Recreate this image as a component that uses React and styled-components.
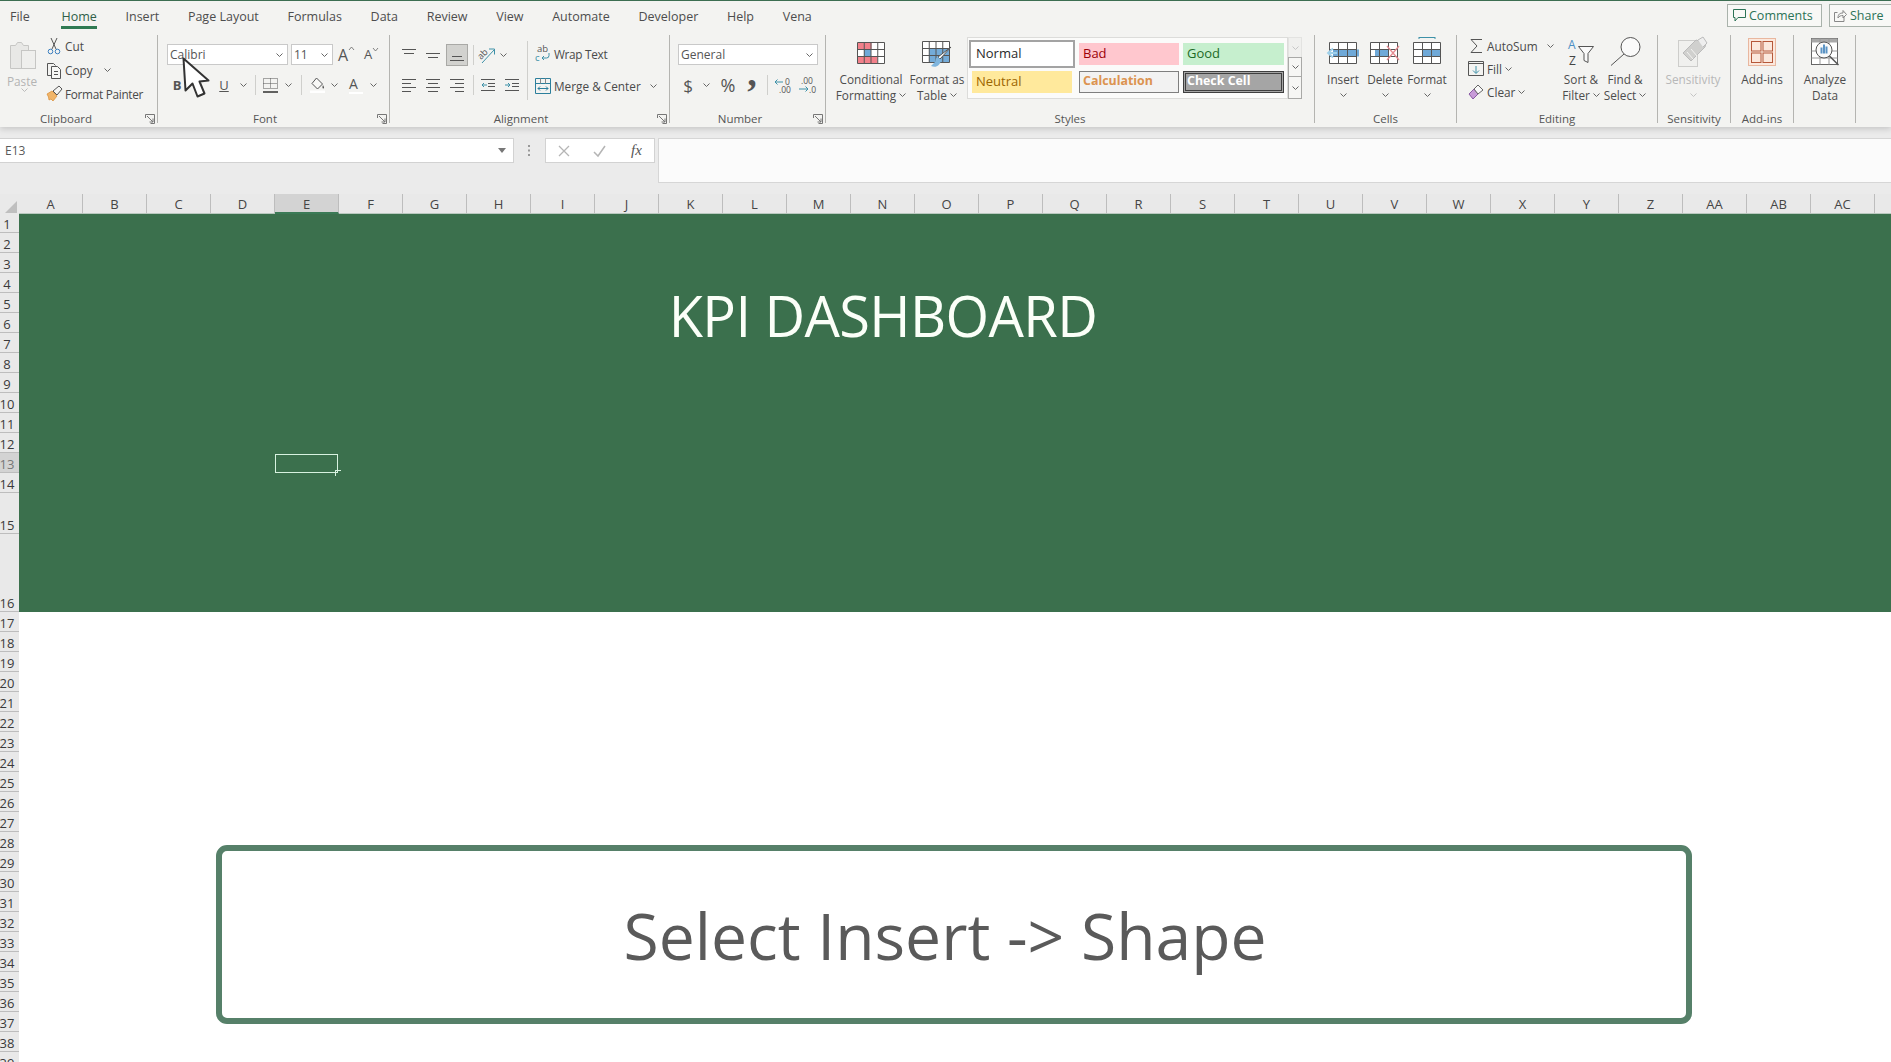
import React from 'react';
import styled, { createGlobalStyle } from 'styled-components';

const Global = createGlobalStyle`
  html, body { margin: 0; padding: 0; background: #fff; }
  #root { width: 1891px; height: 1062px; overflow: hidden; }
  * { box-sizing: border-box; }
`;

const Page = styled.div`
  position: relative; width: 1891px; height: 1062px; overflow: hidden; background: #fff;
  font-family: "Open Sans", "Noto Sans", sans-serif; font-size: 11.8px; color: #4a4a4a;
  display: flex; flex-direction: column;
`;
const Ribbon = styled.header`
  flex: none; height: 127px; background: #f3f3f1; border-top: 1px solid #3c6e52;
  box-shadow: 0 2px 6px rgba(0,0,0,.16); position: relative; z-index: 2;
`;
const TabRow = styled.nav`
  height: 28px; display: flex; align-items: flex-start; padding-left: 10px; gap: 28.7px; font-size: 12.5px;
`;
const Tab = styled.div`
  height: 28px; padding-top: 7px; line-height: 18px; white-space: nowrap; color: #4d4d4d;
  margin-left: ${p => p.$ml || 0}px;
  ${p => p.$active && 'border-bottom: 3px solid #2f7a52; color: #2f5f48;'}
`;
const HeadActions = styled.div`
  margin-left: auto; margin-right: -8px; margin-top: 3px; display: flex; gap: 7px;
`;
const HeadBtn = styled.div`
  display: flex; align-items: center; gap: 3px; height: 23px; padding-left: ${p => p.$pl}px;
  width: ${p => p.$w}px; flex: none; border: 1px solid #a9b2ab; background: #f8f8f6;
  color: #2c7356; font-size: 12.5px; white-space: nowrap;
`;
const Groups = styled.div`display: flex; height: 98px;`;
const Group = styled.section`
  flex: none; width: ${p => p.$w}px; height: 88px; margin-top: 6px; display: flex; flex-direction: column;
  border-right: 1px solid #b4b4b1;
`;
const Body = styled.div`
  flex: 1; min-height: 0; display: flex; padding-left: ${p => p.$pl || 0}px;
`;
const Footer = styled.div`flex: none; height: 14px; margin-bottom: -3px; display: flex; align-items: center;`;
const GroupLabel = styled.div`
  flex: 1; text-align: center; line-height: 14px; font-size: 11.5px; color: #555; padding-right: ${p => p.$pr || 0}px; white-space: nowrap;
`;
const LauncherBox = styled.div`flex: none; width: 10px; height: 10px; margin-right: 2px;`;

const PasteCol = styled.div`
  flex: none; width: 32px; margin-left: 6px; margin-right: 8px; display: flex; flex-direction: column; align-items: center;
  color: #b4b4b4; padding-top: 6px;
`;
const PasteText = styled.div`line-height: 14px; margin-top: 4px;`;
const Stack = styled.div`
  flex: none; width: ${p => p.$w ? p.$w + 'px' : 'auto'}; display: flex; flex-direction: column; padding-top: ${p => p.$pt || 0}px;
`;
const SmallRow = styled.div`
  height: ${p => p.$h || 24}px; padding-bottom: 2px; display: flex; align-items: center; gap: 3px; white-space: nowrap;
`;
const Tight = styled.span`letter-spacing: -.3px;`;
const ChevGap = styled.span`display: inline-flex; margin-left: ${p => p.$ml || 4}px;`;
const Controls = styled.div`flex: none; width: ${p => p.$w ? p.$w + 'px' : 'auto'}; display: flex; flex-direction: column; padding-top: 9px;`;
const Row1 = styled.div`height: 21px; display: flex; align-items: center;`;
const Row2 = styled.div`height: 26px; margin-top: 7px; display: flex; align-items: center;`;
const Select = styled.div`
  flex: none; width: ${p => p.$w}px; height: 21px; margin-right: ${p => p.$mr || 0}px; background: #fff; border: 1px solid #c9c9c9;
  display: flex; align-items: center; justify-content: space-between; padding: 0 4px 0 2px; color: #555; font-size: 12px;
`;
const Slot = styled.div`
  flex: none; width: ${p => p.$w}px; height: 22px; display: flex; align-items: center; justify-content: center;
  font-size: ${p => p.$fs || 12}px; font-weight: ${p => p.$b ? 700 : 400}; color: ${p => p.$c || '#555'};
  line-height: 1;
`;
const SelectedTool = styled.div`
  width: 22px; height: 22px; background: #d2d2cf; border: 1px solid #a9a9a6; display: flex; align-items: center; justify-content: center;
`;
const Divider = styled.div`
  flex: none; width: 1px; height: 20px; background: #cfcfcc; margin: 0 ${p => p.$r ?? p.$m}px 0 ${p => p.$m}px;
`;
const TallDivider = styled.div`
  flex: none; width: 1px; height: 59px; margin-top: 6px; background: #cfcfcc;
`;
const TextRow = styled.div`
  display: flex; align-items: center; gap: 3px; white-space: nowrap; height: 21px;
`;
const RightStack = styled.div`
  flex: none; display: flex; flex-direction: column; padding: 8px 0 0 7px; gap: 11px;
`;
const Big = styled.div`
  flex: none; width: ${p => p.$w}px; margin-right: ${p => p.$mr || 0}px; display: flex; flex-direction: column; align-items: center;
  color: ${p => p.$dim ? '#b8b8b8' : '#4d4d4d'};
`;
const BigIcon = styled.div`
  flex: none; height: 37px; margin-bottom: -1px; display: flex; align-items: flex-end; padding-bottom: ${p => p.$pb ?? 8}px;
`;
const BigLine = styled.div`
  height: 16px; line-height: 16px; display: flex; align-items: center; gap: 3px; white-space: nowrap;
`;
const Gallery = styled.div`
  flex: none; width: 321px; height: 62px; margin-top: 2px; background: #fbfbfa; border: 1px solid #dcdcda; padding: 2px 0 0 1px;
  display: grid; grid-template-columns: 106px 100px 101px; grid-template-rows: 28px 22px; column-gap: 4px; row-gap: 3px;
`;
const StyleCell = styled.div`
  display: flex; align-items: center; padding: 0 0 2px ${p => p.$pl || 4}px; font-size: ${p => p.$b ? 12.4 : 13}px; line-height: 1;
  background: ${p => p.$bg}; color: ${p => p.$c}; font-weight: ${p => p.$b ? 700 : 400};
  border: ${p => p.$bd || 'none'};
  ${p => p.$short && 'height: 22px; align-self: center;'}
  ${p => p.$inset && 'width: 100px; justify-self: center;'}
`;
const GalleryArrows = styled.div`
  flex: none; width: 14px; margin-top: 2px; display: flex; flex-direction: column;
`;
const ArrowBtn = styled.div`
  height: ${p => p.$h}px; display: flex; align-items: center; justify-content: center;
  border: 1px solid ${p => p.$off ? '#e3e3e1' : '#a9a9a7'}; background: ${p => p.$off ? '#f0f0ee' : '#f6f6f4'};
  margin-top: ${p => p.$off ? 0 : -1}px;
`;
const FormulaBar = styled.div`
  flex: none; height: 67px; background: #ebebeb; padding-top: 11px; display: flex; align-items: flex-start;
`;
const NameBox = styled.div`
  flex: none; width: 514px; height: 25px; background: #fff; border: 1px solid #d2d2d2; border-left: none;
  display: flex; align-items: center; justify-content: space-between; padding: 0 7px 0 5px; font-size: 12px; color: #5a5a5a;
`;
const Grip = styled.div`flex: none; width: 31px; display: flex; justify-content: center; padding-top: 7px;`;
const FxBox = styled.div`
  flex: none; width: 110px; height: 25px; background: #fff; border: 1px solid #d2d2d2; display: flex; align-items: center; padding-left: 12px; gap: 23px;
`;
const FxText = styled.span`font-family: "Liberation Serif", serif; font-style: italic; font-size: 15px; color: #555; margin-left: 2px;`;
const FormulaInput = styled.div`
  flex: none; width: 1240px; height: 45px; margin-left: 3px; background: #fbfbfb; border: 1px solid #d6d6d6;
`;
const ColHeaders = styled.div`
  flex: none; height: 20px; display: flex; background: #e9e9e9;
`;
const Corner = styled.div`flex: none; width: 19px; height: 20px; display: flex; align-items: flex-end; justify-content: flex-end; padding: 0 2px 1px 0;`;
const ColHead = styled.div`
  flex: none; width: 64px; height: 20px; padding-top: 1px; display: flex; align-items: center; justify-content: center; font-size: 13px; color: #454545;
  border-right: 1px solid #bdbdbd; 
  background: ${p => p.$sel ? '#d3d3d3' : 'transparent'};
  border-bottom: ${p => p.$sel ? '2px solid #3b7a56' : '1px solid #b9c9bf'};
`;
const ColRest = styled.div`flex: 1; border-bottom: 1px solid #b9c9bf;`;
const SheetArea = styled.div`flex: 1; min-height: 0; display: flex;`;
const RowHeaders = styled.div`flex: none; width: 19px; background: #e9e9e9; display: flex; flex-direction: column; overflow: hidden;`;
const RowHead = styled.div`
  flex: none; height: ${p => p.$h}px; display: flex; align-items: flex-end; justify-content: center; padding-right: 5px;
  border-bottom: 1px solid #bdbdbd; line-height: 16px; font-size: 13px; white-space: nowrap;
  color: ${p => p.$sel ? '#777' : '#3a3a3a'}; background: ${p => p.$sel ? '#d3d3d3' : 'transparent'};
`;
const Canvas = styled.main`flex: 1; min-width: 0; display: flex; flex-direction: column; background: #fff;`;
const Banner = styled.div`
  position: relative; flex: none; height: 398px; background: #3b704d; display: flex; justify-content: center; padding: 63px 144px 0 0;
`;
const Title = styled.h1`
  margin: 0; font-weight: 400; font-size: 56px; line-height: 76px; height: 76px; letter-spacing: -.6px; color: #fbfff8; white-space: nowrap;
`;
const CellSelection = styled.div`
  position: absolute; left: 256px; top: 240px; width: 63px; height: 19px; border: 1px solid #d8f2e0;
`;
const FillHandle = styled.div`
  position: absolute; right: -4px; bottom: -4px; width: 6px; height: 6px; border-left: 1px solid #d8f2e0; border-top: 1px solid #d8f2e0;
`;
const ShapeBox = styled.div`
  flex: none; width: 1476px; height: 179px; margin: 233px 0 0 197px; border: 6px solid #568069; border-radius: 11px; background: #fff;
  display: flex; align-items: center; justify-content: center; padding: 2px 18px 0 0;
`;
const ShapeText = styled.div`
  font-size: 64.200px; line-height: 1; color: #5a5a5a; white-space: nowrap;
`;
const Cursor = styled.svg`position: absolute; left: 180px; top: 55px; z-index: 5;`;

const Ic = styled.svg`display: block; flex: none; overflow: visible;`;

const Chev = ({ c = '#666' }) => (
  <Ic width="7" height="4" viewBox="0 0 7 4"><path d="M.5.5l3 3 3-3" fill="none" stroke={c} /></Ic>
);
const Launcher = () => (
  <LauncherBox>
    <Ic width="10" height="10" viewBox="0 0 10 10" fill="none" stroke="#777"><path d="M.5 4V.5H9.5V9.5H5.5M2 2l6 6M8 4.5V8H4.5" /></Ic>
  </LauncherBox>
);
const Paste = () => (
  <Ic width="30" height="29" viewBox="0 0 30 29">
    <path d="M3.5 4.5h5l2-3h4l2 3h5v23h-18z" fill="#e8e8e6" stroke="#c6c6c4" />
    <rect x="14.5" y="9.5" width="14" height="18" fill="#efefed" stroke="#c6c6c4" />
  </Ic>
);
const Scissors = () => (
  <Ic width="16" height="17" viewBox="0 0 16 17" fill="none">
    <path d="M5 0l5 11M11 0L6 11" stroke="#555" />
    <circle cx="4.5" cy="13.5" r="2.3" stroke="#3c7fbf" /><circle cx="11.5" cy="13.5" r="2.3" stroke="#3c7fbf" />
  </Ic>
);
const Copy = () => (
  <Ic width="16" height="17" viewBox="0 0 16 17" fill="none" stroke="#555">
    <path d="M5 13.5H1.5V1.5h6l2 2" /><path d="M5.5 4.5h6l3 3v9h-9z" fill="#f8f8f6" /><path d="M8 9.5h4M8 12.5h4" />
  </Ic>
);
const Painter = () => (
  <Ic width="16" height="16" viewBox="0 0 16 16">
    <path d="M1 8l5-3 5 5-4 5-2-2-2 1-.5-3z" fill="#f0b56a" stroke="#d88a30" strokeWidth=".7" />
    <path d="M7 5l6-5 3 3-5 6z" fill="#f4f4f2" stroke="#555" />
  </Ic>
);
const Borders = () => (
  <Ic width="15" height="15" viewBox="0 0 15 15" fill="none" stroke="#555">
    <path d="M.5.5h14v10H.5zM7.5.5v10M.5 5.5h14" strokeDasharray="1 1" />
    <path d="M0 14h15" strokeWidth="1.4" stroke="#222" />
  </Ic>
);
const Bucket = () => (
  <Ic width="16" height="16" viewBox="0 0 16 16">
    <path d="M6.5 1l6 6-5 5-5.5-5.5z" fill="#f8f8f6" stroke="#555" />
    <path d="M13 8c1 2 1.500 3 .5 3.500S12 10 13 8z" fill="#555" />
    <rect x="0" y="13.500" width="15" height="2.500" fill="#fff" />
  </Ic>
);
const UnderBar = styled.span`display: block; width: 14px; height: 2px; background: #fff; margin-top: 1px;`;
const ColorA = () => (
  <Stack>
    <span>A</span>
    <UnderBar />
  </Stack>
);
const Lines = ({ d }) => (
  <Ic width="14" height="16" viewBox="0 0 14 16" fill="none" stroke="#555"><path d={d} /></Ic>
);
const L = {
  top: 'M0 2.500h14M2 6.500h10', mid: 'M0 6.500h14M2 10.500h10', bot: 'M2 9.500h10M0 13.500h14',
  left: 'M0 2.500h14M0 6.500h9M0 10.500h14M0 14.500h9', cen: 'M0 2.500h14M2 6.500h10M0 10.500h14M2 14.500h10', right: 'M0 2.500h14M5 6.500h9M0 10.500h14M5 14.500h9',
};
const Indent = ({ flip }) => (
  <Ic width="14" height="14" viewBox="0 0 14 14" fill="none" stroke="#555">
    <path d="M0 1.500h14M7 5.500h7M7 8.500h7M0 12.500h14" />
    <path d={flip ? 'M0 7h5M3 5l2 2-2 2' : 'M1 7h5M3 5L1 7l2 2'} stroke="#3d91a8" />
  </Ic>
);
const Orient = () => (
  <Ic width="18" height="18" viewBox="0 0 18 18" fill="none">
    <text x="0" y="11" fontSize="9" fontFamily="Open Sans" fill="#555" transform="rotate(-45 5 9)">ab</text>
    <path d="M4 17L16 4M11 3h5.500v5.500" stroke="#3d91a8" />
  </Ic>
);
const Wrap = () => (
  <Ic width="16" height="17" viewBox="0 0 16 17" fill="none">
    <text x="2" y="7" fontSize="9.500" fontFamily="Open Sans" fill="#555">ab</text>
    <text x="0" y="15.500" fontSize="9.500" fontFamily="Open Sans" fill="#3d91a8">c</text>
    <path d="M14 8v2.500a2.500 2.500 0 0 1-2.500 2.500H7M9 11l-2 2 2 2" stroke="#3d91a8" />
  </Ic>
);
const Merge = () => (
  <Ic width="16" height="16" viewBox="0 0 16 16" fill="none" stroke="#2c7f9c">
    <path d="M.5 .5h15v15H.5zM.5 5.500h15" /><path d="M5.500.5v5M10.500.5v5" stroke="#888" />
    <path d="M3 10.500h10M5 8.500l-2 2 2 2M11 8.500l2 2-2 2" />
  </Ic>
);
const Decimal = ({ inc }) => (
  <Ic width="18" height="17" viewBox="0 0 18 17">
    {inc ? (
      <>
        <text x="3" y="7" fontSize="8.500" fontFamily="Open Sans" fill="#555">.00</text>
        <text x="11" y="15.500" fontSize="8.500" fontFamily="Open Sans" fill="#555">.0</text>
        <path d="M1 12h9M7.500 9.500L10 12l-2.500 2.500" fill="none" stroke="#3d91a8" />
      </>
    ) : (
      <>
        <path d="M1 5h8M3.500 2.500L1 5l2.500 2.500" fill="none" stroke="#3d91a8" />
        <text x="11" y="8" fontSize="8.500" fontFamily="Open Sans" fill="#555">0</text>
        <text x="5" y="15.500" fontSize="8.500" fontFamily="Open Sans" fill="#555">.00</text>
      </>
    )}
  </Ic>
);
const GridLines = ({ x, y, w, h, cols, rows }) => {
  const cw = w / cols, rh = h / rows;
  let d = `M${x} ${y}h${w}v${h}h${-w}z`;
  for (let i = 1; i < cols; i++) d += `M${x + cw * i} ${y}v${h}`;
  for (let i = 1; i < rows; i++) d += `M${x} ${y + rh * i}h${w}`;
  return <path d={d} fill="none" stroke="#555" />;
};
const CondFmt = () => (
  <Ic width="28" height="22" viewBox="0 0 28 22">
    <rect x=".5" y=".5" width="27" height="21" fill="#fff" />
    <rect x=".5" y=".5" width="14" height="7" fill="#f2808a" />
    <rect x="7" y="7.500" width="7" height="7" fill="#6fa9d8" />
    <rect x=".5" y="14.500" width="20" height="7" fill="#f2808a" />
    <GridLines x={.5} y={.5} w={27} h={21} cols={4} rows={3} />
  </Ic>
);
const FmtTable = () => (
  <Ic width="30" height="27" viewBox="0 0 30 27">
    <rect x=".5" y=".5" width="27" height="21" fill="#fff" />
    <rect x="7" y="7.500" width="20" height="14" fill="#74abd8" />
    <GridLines x={.5} y={.5} w={27} h={21} cols={4} rows={3} />
    <path d="M29 6L18 18l-2-2z" fill="#fff" stroke="#555" />
    <path d="M16 16c-3 1-2 4-3 5l-4 4c5 2 9 0 10-6z" fill="#7fb5dd" />
  </Ic>
);
const InsertCells = () => (
  <Ic width="32" height="22" viewBox="0 0 32 22">
    <rect x="2.500" y=".5" width="27" height="21" fill="#fff" />
    <rect x="6" y="7.500" width="26" height="7" fill="#6fa9d8" />
    <GridLines x={2.500} y={.5} w={27} h={21} cols={3} rows={3} />
    <path d="M10 11H2M6 6.500L1 11l5 4.500" fill="none" stroke="#9fd0ea" strokeWidth="1.800" />
  </Ic>
);
const DeleteCells = () => (
  <Ic width="30" height="22" viewBox="0 0 30 22">
    <rect x=".5" y=".5" width="27" height="21" fill="#fff" />
    <rect x="5" y="7.500" width="13" height="7" fill="#6fa9d8" />
    <GridLines x={.5} y={.5} w={27} h={21} cols={3} rows={3} />
    <path d="M17 4l12 14M29 4L17 18" stroke="#e58a90" strokeWidth="1.300" />
  </Ic>
);
const FormatCells = () => (
  <Ic width="28" height="27" viewBox="0 0 28 27">
    <path d="M6 .5h16M6 0v2M22 0v2" stroke="#3d91a8" fill="none" />
    <rect x=".5" y="5.500" width="27" height="21" fill="#fff" />
    <rect x="9" y="12.500" width="18" height="7" fill="#6fa9d8" />
    <GridLines x={.5} y={5.500} w={27} h={21} cols={3} rows={3} />
  </Ic>
);
const Sigma = () => (
  <Ic width="16" height="16" viewBox="0 0 16 16" fill="none" stroke="#555"><path d="M14 1.500H3L9 8l-6 6.500h11" /></Ic>
);
const FillIcon = () => (
  <Ic width="16" height="15" viewBox="0 0 16 15" fill="none" stroke="#555">
    <path d="M.5 .5h15v14H.5zM.5 2.500h15" /><path d="M8 5v7M5 9.500L8 12.500l3-3" stroke="#3d91a8" />
  </Ic>
);
const Eraser = () => (
  <Ic width="16" height="16" viewBox="0 0 16 16" stroke="#8a5aa5">
    <path d="M1 10l5-5 4 5-5 5z" fill="#c79bd8" /><path d="M6 5l4-4 5 5-5 4z" fill="#fafafa" stroke="#666" />
  </Ic>
);
const SortFilter = () => (
  <Ic width="26" height="28" viewBox="0 0 26 28">
    <text x="0" y="10.500" fontSize="12" fontFamily="Open Sans" fill="#4a8ec4">A</text>
    <text x="1" y="27" fontSize="12" fontFamily="Open Sans" fill="#444">Z</text>
    <path d="M10.500 8.500h15l-5.500 7v9l-4-2v-7z" fill="#fafafa" stroke="#555" />
  </Ic>
);
const Lens = () => (
  <Ic width="31" height="29" viewBox="0 0 31 29" fill="none" stroke="#555">
    <circle cx="20.500" cy="10" r="9.500" fill="#fafafa" /><path d="M14 17L1 28.500" />
  </Ic>
);
const Sensitivity = () => (
  <Ic width="30" height="30" viewBox="0 0 30 30">
    <rect x=".5" y="3.500" width="19" height="26" fill="#f0f0ee" stroke="#cdcdcb" />
    <path d="M5 16L18 3l10 3-1 4-14 14z" fill="#d0d0ce" stroke="#bbb" />
    <path d="M9 15l6 7M13 12l6 7" stroke="#f3f3f1" />
    <path d="M20 3l5-3 4 6-4 4" fill="#eee" stroke="#bbb" />
  </Ic>
);
const AddIns = () => (
  <Ic width="28" height="28" viewBox="0 0 28 28" fill="none" stroke="#b5583a">
    <rect x=".5" y=".5" width="27" height="27" fill="#fbe8dd" stroke="#e9b79f" />
    <rect x="3.500" y="3.500" width="9.500" height="9.500" /><rect x="15" y="3.500" width="9.500" height="9.500" />
    <rect x="3.500" y="15" width="9.500" height="9.500" /><rect x="15" y="15" width="9.500" height="9.500" />
  </Ic>
);
const Analyze = () => (
  <Ic width="29" height="28" viewBox="0 0 29 28">
    <rect x=".5" y=".5" width="26" height="26" fill="#fff" stroke="#666" />
    <rect x=".5" y=".5" width="26" height="4" fill="#a8a8a8" />
    <path d="M9 .5v26M18 .5v26M.5 13h26M.5 20h26" stroke="#999" fill="none" />
    <circle cx="13" cy="12" r="8" fill="#fafafa" stroke="#555" />
    <path d="M9.500 9.500h2v6h-2zM12 6.500h2v9h-2zM14.500 8.500h2v7h-2z" fill="#5b93c4" />
    <path d="M18.500 18l9 9" stroke="#555" strokeWidth="1.500" />
  </Ic>
);
const Bubble = () => (
  <Ic width="13" height="13" viewBox="0 0 13 13" fill="none" stroke="#2c7356"><path d="M.5 .5h12v8H5L2 12V8.500H.5z" /></Ic>
);
const ShareI = () => (
  <Ic width="13" height="13" viewBox="0 0 13 13" fill="none" stroke="#888">
    <path d="M10 7.500v5H.5v-9h3" /><path d="M4 9c0-4 2-5 5-5V1.500l3.500 4L9 9V6.500C7 6.500 5 7 4 9z" />
  </Ic>
);
const XMark = () => (
  <Ic width="12" height="12" viewBox="0 0 12 12" fill="none" stroke="#b5b5b5" strokeWidth="1.300"><path d="M1 1l10 10M11 1L1 11" /></Ic>
);
const Check = () => (
  <Ic width="13" height="12" viewBox="0 0 13 12" fill="none" stroke="#b5b5b5" strokeWidth="1.500"><path d="M1 7l4 4L12 1" /></Ic>
);
const Tri = () => (
  <Ic width="8" height="5" viewBox="0 0 8 5"><path d="M0 0h8L4 5z" fill="#777" /></Ic>
);
const DotsV = () => (
  <Ic width="3" height="11" viewBox="0 0 3 11"><path d="M0 0h2v2H0zM0 4.500h2v2H0zM0 9h2v2H0z" fill="#999" /></Ic>
);
const Caret = ({ down }) => (
  <Ic width="5" height="3" viewBox="0 0 5 3"><path d={down ? 'M0 0l2.500 3L5 0' : 'M0 3l2.500-3L5 3'} fill="none" stroke="#666" strokeWidth=".8" /></Ic>
);
const GrowRow = styled.span`display: flex; align-items: flex-start; gap: 1px;`;
const CommaMark = styled.span`font-family: "Liberation Serif", serif; font-weight: 700; font-size: 38px; transform: translateY(-12px);`;

const COLS = 'A B C D E F G H I J K L M N O P Q R S T U V W X Y Z AA AB AC'.split(' ');
const ROWS = Array.from({ length: 39 }, (_, i) => ({ n: i + 1, h: i === 0 ? 19 : i === 14 ? 41 : i === 15 ? 78 : 20 }));
const TABS = ['File', 'Home', 'Insert', 'Page Layout', 'Formulas', 'Data', 'Review', 'View', 'Automate', 'Developer', 'Help', 'Vena'];

export default function App() {
  return (
    <Page>
      <Global />
      <Ribbon>
        <TabRow>
          {TABS.map(t => <Tab key={t} $active={t === 'Home'} $ml={t === 'Home' ? 3 : 0}>{t}</Tab>)}
          <HeadActions>
            <HeadBtn $w={95} $pl={5}><Bubble />Comments</HeadBtn>
            <HeadBtn $w={70} $pl={4}><ShareI />Share</HeadBtn>
          </HeadActions>
        </TabRow>
        <Groups>
          <Group $w={158}>
            <Body>
              <PasteCol><Paste /><PasteText>Paste</PasteText><ChevGap $ml={0}><Chev c="#bbb" /></ChevGap></PasteCol>
              <Stack>
                <SmallRow><Scissors />Cut</SmallRow>
                <SmallRow><Copy />Copy<ChevGap $ml={8}><Chev /></ChevGap></SmallRow>
                <SmallRow><Painter /><Tight>Format Painter</Tight></SmallRow>
              </Stack>
            </Body>
            <Footer><GroupLabel $pr={13}>Clipboard</GroupLabel><Launcher /></Footer>
          </Group>
          <Group $w={232}>
            <Body $pl={9}>
              <Controls>
                <Row1>
                  <Select $w={121} $mr={3}>Calibri<Chev /></Select>
                  <Select $w={42}>11<Chev /></Select>
                  <Slot $w={26} $fs={16}><GrowRow>A<Caret /></GrowRow></Slot>
                  <Slot $w={24} $fs={13}><GrowRow>A<Caret down /></GrowRow></Slot>
                </Row1>
                <Row2>
                  <Slot $w={20} $b $fs={13}>B</Slot>
                  <Slot $w={23} />
                  <Slot $w={28} $fs={13}><u>U</u></Slot>
                  <Slot $w={10}><Chev /></Slot>
                  <Divider $m={7} />
                  <Slot $w={15}><Borders /></Slot>
                  <Slot $w={20}><Chev /></Slot>
                  <Divider $m={3} $r={9} />
                  <Slot $w={14}><Bucket /></Slot>
                  <Slot $w={18}><Chev /></Slot>
                  <Slot $w={26} $fs={14}><ColorA /></Slot>
                  <Slot $w={8}><Chev /></Slot>
                </Row2>
              </Controls>
            </Body>
            <Footer><GroupLabel $pr={5}>Font</GroupLabel><Launcher /></Footer>
          </Group>
          <Group $w={280}>
            <Body $pl={7}>
              <Controls $w={130}>
                <Row1>
                  <Slot $w={24}><Lines d={L.top} /></Slot>
                  <Slot $w={24}><Lines d={L.mid} /></Slot>
                  <Slot $w={24}><SelectedTool><Lines d={L.bot} /></SelectedTool></Slot>
                  <Divider $m={4} $r={3} />
                  <Slot $w={20}><Orient /></Slot>
                  <Slot $w={12}><Chev /></Slot>
                </Row1>
                <Row2>
                  <Slot $w={24}><Lines d={L.left} /></Slot>
                  <Slot $w={24}><Lines d={L.cen} /></Slot>
                  <Slot $w={24}><Lines d={L.right} /></Slot>
                  <Divider $m={4} $r={0} />
                  <Slot $w={28}><Indent /></Slot>
                  <Slot $w={20}><Indent flip /></Slot>
                </Row2>
              </Controls>
              <TallDivider />
              <RightStack>
                <TextRow><Wrap /><Tight>Wrap Text</Tight></TextRow>
                <TextRow><Merge />Merge &amp; Center<ChevGap $ml={6}><Chev /></ChevGap></TextRow>
              </RightStack>
            </Body>
            <Footer><GroupLabel $pr={5}>Alignment</GroupLabel><Launcher /></Footer>
          </Group>
          <Group $w={156}>
            <Body $pl={8}>
              <Controls>
                <Row1><Select $w={140}>General<Chev /></Select></Row1>
                <Row2>
                  <Slot $w={20} $fs={17}>$</Slot>
                  <Slot $w={16}><Chev /></Slot>
                  <Slot $w={28} $fs={18}>%</Slot>
                  <Slot $w={20}><CommaMark>,</CommaMark></Slot>
                  <Divider $m={5} $r={0} />
                  <Slot $w={30}><Decimal /></Slot>
                  <Slot $w={18}><Decimal inc /></Slot>
                </Row2>
              </Controls>
            </Body>
            <Footer><GroupLabel $pr={3}>Number</GroupLabel><Launcher /></Footer>
          </Group>
          <Group $w={489}>
            <Body $pl={15}>
              <Big $w={60} $mr={6}>
                <BigIcon><CondFmt /></BigIcon>
                <BigLine>Conditional</BigLine>
                <BigLine>Formatting<Chev /></BigLine>
              </Big>
              <Big $w={60}>
                <BigIcon $pb={4}><FmtTable /></BigIcon>
                <BigLine>Format as</BigLine>
                <BigLine>Table<Chev /></BigLine>
              </Big>
              <Gallery>
                <StyleCell $bg="#fff" $c="#2a2a2a" $bd="2px solid #a3a3a3" $pl={5}>Normal</StyleCell>
                <StyleCell $short $bg="#ffc7ce" $c="#9c0006">Bad</StyleCell>
                <StyleCell $short $bg="#c6efce" $c="#1d6b27">Good</StyleCell>
                <StyleCell $inset $bg="#ffe99c" $c="#9c6500">Neutral</StyleCell>
                <StyleCell $bg="#f2f2f2" $c="#dc9350" $b $bd="1px solid #7f7f7f" $pl={3}>Calculation</StyleCell>
                <StyleCell $bg="#a5a5a5" $c="#fff" $b $bd="3px double #3f3f3f" $pl={1}>Check Cell</StyleCell>
              </Gallery>
              <GalleryArrows>
                <ArrowBtn $h={21} $off><Chev c="#c6c6c6" /></ArrowBtn>
                <ArrowBtn $h={20}><Chev /></ArrowBtn>
                <ArrowBtn $h={23}><Chev /></ArrowBtn>
              </GalleryArrows>
            </Body>
            <Footer><GroupLabel>Styles</GroupLabel></Footer>
          </Group>
          <Group $w={142}>
            <Body $pl={7}>
              <Big $w={42}><BigIcon><InsertCells /></BigIcon><BigLine>Insert</BigLine><BigLine><Chev /></BigLine></Big>
              <Big $w={42}><BigIcon><DeleteCells /></BigIcon><BigLine>Delete</BigLine><BigLine><Chev /></BigLine></Big>
              <Big $w={42}><BigIcon><FormatCells /></BigIcon><BigLine>Format</BigLine><BigLine><Chev /></BigLine></Big>
            </Body>
            <Footer><GroupLabel>Cells</GroupLabel></Footer>
          </Group>
          <Group $w={201}>
            <Body $pl={11}>
              <Stack $w={92}>
                <SmallRow $h={23}><Sigma />AutoSum<ChevGap $ml={6}><Chev /></ChevGap></SmallRow>
                <SmallRow $h={23}><FillIcon />Fill<Chev /></SmallRow>
                <SmallRow $h={23}><Eraser />Clear<Chev /></SmallRow>
              </Stack>
              <Big $w={42} $mr={2}><BigIcon $pb={6}><SortFilter /></BigIcon><BigLine>Sort &amp;</BigLine><BigLine>Filter<Chev /></BigLine></Big>
              <Big $w={42}><BigIcon $pb={6}><Lens /></BigIcon><BigLine>Find &amp;</BigLine><BigLine>Select<Chev /></BigLine></Big>
            </Body>
            <Footer><GroupLabel>Editing</GroupLabel></Footer>
          </Group>
          <Group $w={73}>
            <Body><Big $w={70} $dim><BigIcon $pb={5}><Sensitivity /></BigIcon><BigLine>Sensitivity</BigLine><BigLine><Chev c="#c4c4c4" /></BigLine></Big></Body>
            <Footer><GroupLabel>Sensitivity</GroupLabel></Footer>
          </Group>
          <Group $w={63}>
            <Body><Big $w={62}><BigIcon $pb={6}><AddIns /></BigIcon><BigLine>Add-ins</BigLine></Big></Body>
            <Footer><GroupLabel>Add-ins</GroupLabel></Footer>
          </Group>
          <Group $w={62}>
            <Body><Big $w={62}><BigIcon $pb={6}><Analyze /></BigIcon><BigLine>Analyze</BigLine><BigLine>Data</BigLine></Big></Body>
            <Footer><GroupLabel>&nbsp;</GroupLabel></Footer>
          </Group>
        </Groups>
      </Ribbon>
      <FormulaBar>
        <NameBox>E13<Tri /></NameBox>
        <Grip><DotsV /></Grip>
        <FxBox><XMark /><Check /><FxText>fx</FxText></FxBox>
        <FormulaInput />
      </FormulaBar>
      <ColHeaders>
        <Corner><Ic width="12" height="12" viewBox="0 0 12 12"><path d="M12 0v12H0z" fill="#bfbfbf" /></Ic></Corner>
        {COLS.map(c => <ColHead key={c} $sel={c === 'E'}>{c}</ColHead>)}
        <ColRest />
      </ColHeaders>
      <SheetArea>
        <RowHeaders>
          {ROWS.map(r => <RowHead key={r.n} $h={r.h} $sel={r.n === 13}>{r.n}</RowHead>)}
        </RowHeaders>
        <Canvas>
          <Banner>
            <Title>KPI DASHBOARD</Title>
            <CellSelection><FillHandle /></CellSelection>
          </Banner>
          <ShapeBox><ShapeText>Select Insert -&gt; Shape</ShapeText></ShapeBox>
        </Canvas>
      </SheetArea>
      <Cursor width="32" height="45" viewBox="0 0 32 45">
        <path d="M3.500 3.500l2 32 7-7 5 13 7-3-5-12 9-1z" fill="#fff" stroke="#333" strokeWidth="2" strokeLinejoin="round" />
      </Cursor>
    </Page>
  );
}
